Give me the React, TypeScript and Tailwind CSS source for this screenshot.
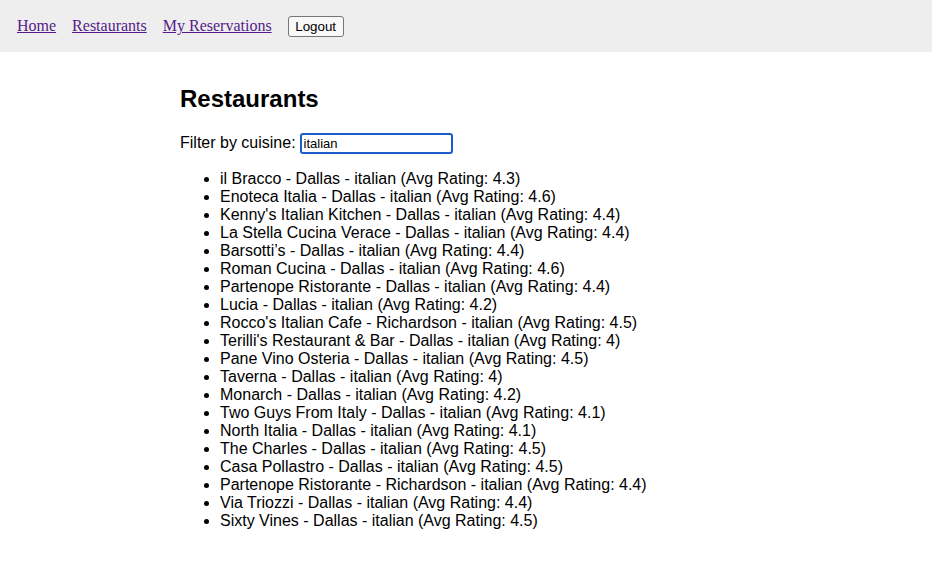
import React from "react";

const items = [
  "il Bracco - Dallas - italian (Avg Rating: 4.3)",
  "Enoteca Italia - Dallas - italian (Avg Rating: 4.6)",
  "Kenny's Italian Kitchen - Dallas - italian (Avg Rating: 4.4)",
  "La Stella Cucina Verace - Dallas - italian (Avg Rating: 4.4)",
  "Barsotti’s - Dallas - italian (Avg Rating: 4.4)",
  "Roman Cucina - Dallas - italian (Avg Rating: 4.6)",
  "Partenope Ristorante - Dallas - italian (Avg Rating: 4.4)",
  "Lucia - Dallas - italian (Avg Rating: 4.2)",
  "Rocco's Italian Cafe - Richardson - italian (Avg Rating: 4.5)",
  "Terilli's Restaurant & Bar - Dallas - italian (Avg Rating: 4)",
  "Pane Vino Osteria - Dallas - italian (Avg Rating: 4.5)",
  "Taverna - Dallas - italian (Avg Rating: 4)",
  "Monarch - Dallas - italian (Avg Rating: 4.2)",
  "Two Guys From Italy - Dallas - italian (Avg Rating: 4.1)",
  "North Italia - Dallas - italian (Avg Rating: 4.1)",
  "The Charles - Dallas - italian (Avg Rating: 4.5)",
  "Casa Pollastro - Dallas - italian (Avg Rating: 4.5)",
  "Partenope Ristorante - Richardson - italian (Avg Rating: 4.4)",
  "Via Triozzi - Dallas - italian (Avg Rating: 4.4)",
  "Sixty Vines - Dallas - italian (Avg Rating: 4.5)",
];

export default function App() {
  return (
    <div className="min-h-[586px] bg-white text-black font-['Liberation_Sans',Arial,sans-serif]">
      <nav className="h-[52px] bg-[#eeeeee] flex items-center pl-[17px] gap-4 font-['Liberation_Serif','Times_New_Roman',serif] text-[16px]">
        <a href="#" className="text-[#551a8b] underline">Home</a>
        <a href="#" className="text-[#551a8b] underline">Restaurants</a>
        <a href="#" className="text-[#551a8b] underline">My Reservations</a>
        <button className="w-[56px] h-[21px] border border-[#767676] rounded-[3px] bg-[#f8f8f8] text-[13.33px] leading-[15px] font-['Liberation_Sans',Arial,sans-serif]">
          Logout
        </button>
      </nav>
      <main className="mx-auto w-[572px] pt-[33px]">
        <h2 className="text-[24px] leading-[28px] font-bold">Restaurants</h2>
        <div className="mt-[19px] flex items-center h-[22px] text-[16px]">
          <span>Filter by cuisine:</span>
          <input
            readOnly
            value="italian"
            className="ml-[4px] w-[153px] h-[21px] border-2 border-[#1a5fc9] rounded-[3px] px-[2px] text-[13px] text-black outline-none font-['Liberation_Sans',Arial,sans-serif]"
          />
        </div>
        <ul className="mt-[16px] pl-[40px] list-disc text-[16px] leading-[18px]">
          {items.map((t) => (
            <li key={t}>{t}</li>
          ))}
        </ul>
      </main>
    </div>
  );
}
